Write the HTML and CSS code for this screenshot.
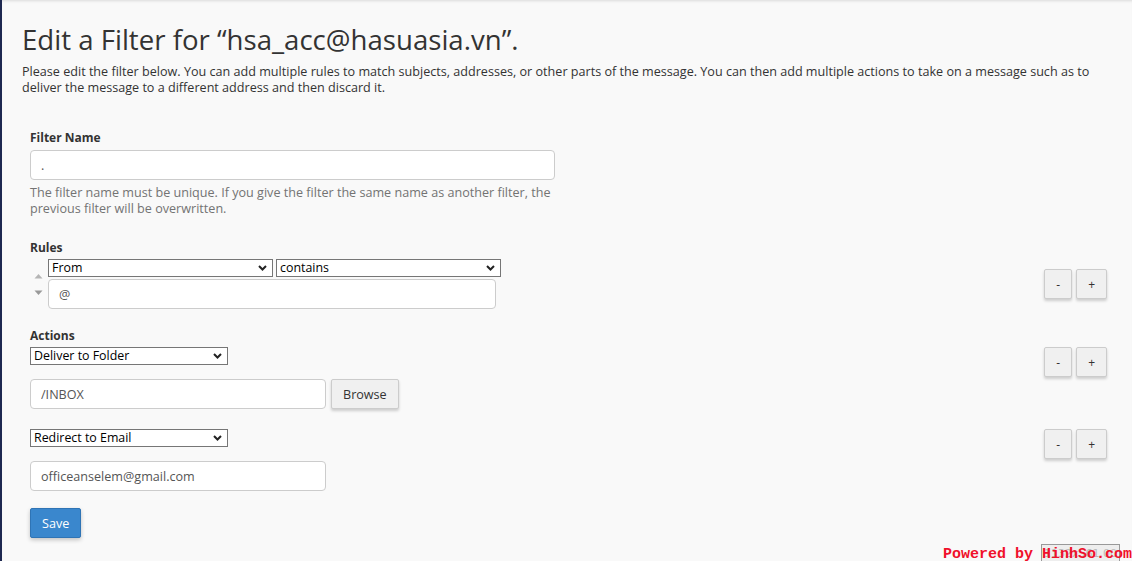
FILE: index.html
```html
<!DOCTYPE html>
<html lang="en">
<head>
    <meta charset="UTF-8">
    <meta name="viewport" content="width=device-width, initial-scale=1.0">
    <title>Edit a Filter</title>
    <link rel="stylesheet" href="styles.css">
</head>
<body>
    <div class="page">
        <h1 class="page-title">Edit a Filter for “hsa_acc@hasuasia.vn”.</h1>
        <p class="intro">Please edit the filter below. You can add multiple rules to match subjects, addresses, or other parts of the message. You can then add multiple actions to take on a message such as to deliver the message to a different address and then discard it.</p>

        <form class="filter-form">
            <div class="form-group name-group">
                <label class="field-label" for="filterName">Filter Name</label>
                <input type="text" class="text-input name-input" id="filterName" value=".">
                <p class="help-text">The filter name must be unique. If you give the filter the same name as another filter, the previous filter will be overwritten.</p>
            </div>

            <div class="form-group rules-group">
                <label class="field-label">Rules</label>
                <div class="rule-row">
                    <div class="rule-order">
                        <svg class="arrow-up" width="9" height="8" viewBox="0 0 9 8"><polygon points="0.5,6.5 4.5,2 8.5,6.5" /></svg>
                        <svg class="arrow-down" width="9" height="8" viewBox="0 0 9 8"><polygon points="0.5,1.5 4.5,6 8.5,1.5" /></svg>
                    </div>
                    <div class="rule-fields">
                        <div class="rule-selects">
                            <select class="plain-select part-select">
                                <option>From</option>
                                <option>Subject</option>
                                <option>To</option>
                            </select>
                            <select class="plain-select match-select">
                                <option>contains</option>
                                <option>equals</option>
                                <option>begins with</option>
                            </select>
                        </div>
                        <input type="text" class="text-input rule-input" value="@">
                    </div>
                    <div class="row-buttons">
                        <button type="button" class="small-btn">-</button>
                        <button type="button" class="small-btn">+</button>
                    </div>
                </div>
            </div>

            <div class="form-group actions-group">
                <label class="field-label">Actions</label>
                <div class="action-row">
                    <div class="action-fields">
                        <select class="plain-select action-select">
                            <option>Deliver to Folder</option>
                            <option>Redirect to Email</option>
                            <option>Discard Message</option>
                        </select>
                        <div class="action-value">
                            <input type="text" class="text-input action-input" value="/INBOX">
                            <button type="button" class="browse-btn">Browse</button>
                        </div>
                    </div>
                    <div class="row-buttons">
                        <button type="button" class="small-btn">-</button>
                        <button type="button" class="small-btn">+</button>
                    </div>
                </div>
                <div class="action-row second-action">
                    <div class="action-fields">
                        <select class="plain-select action-select">
                            <option>Redirect to Email</option>
                            <option>Deliver to Folder</option>
                            <option>Discard Message</option>
                        </select>
                        <div class="action-value">
                            <input type="text" class="text-input action-input" value="officeanselem@gmail.com">
                        </div>
                    </div>
                    <div class="row-buttons">
                        <button type="button" class="small-btn">-</button>
                        <button type="button" class="small-btn">+</button>
                    </div>
                </div>
            </div>

            <button type="submit" class="save-btn">Save</button>
        </form>
    </div>

    <div class="credit">
        <span class="credit-box">1132x561.00</span>
        <span class="credit-text">Powered by HinhSo.com</span>
    </div>
</body>
</html>
```

FILE: styles.css
```css
html, body {
    margin: 0;
    padding: 0;
}

body {
    position: relative;
    background-color: #f9f9f9;
    font-family: "Open Sans", "Liberation Sans", sans-serif;
    font-size: 12.6px;
    line-height: 16px;
    color: #333;
    overflow: hidden;
}

.page {
    box-sizing: border-box;
    min-height: 561px;
    border-left: 2px solid #1e2850;
    padding: 24px 25px 0 20px;
    box-shadow: inset 0 3px 3px -2px rgba(0, 0, 0, 0.12);
}

.page-title {
    margin: 0;
    font-size: 27.6px;
    line-height: 30px;
    font-weight: 400;
    color: #333;
}

.intro {
    margin: 10px 0 0;
}

.filter-form {
    padding-left: 8px;
}

.form-group {
    margin: 0;
}

.name-group {
    margin-top: 34px;
}

.rules-group {
    margin-top: 23px;
}

.actions-group {
    margin-top: 19px;
}

.field-label {
    display: block;
    font-size: 12px;
    font-weight: 700;
    color: #333;
}

.text-input {
    box-sizing: border-box;
    display: block;
    height: 30px;
    padding: 0 10px;
    border: 1px solid #ccc;
    border-radius: 4px;
    background-color: #fff;
    font-family: "Open Sans", "Liberation Sans", sans-serif;
    font-size: 12.6px;
    color: #555;
}

.name-input {
    width: 525px;
    margin-top: 4px;
}

.help-text {
    margin: 5px 0 0;
    width: 545px;
    color: #737373;
}

.plain-select {
    box-sizing: border-box;
    display: block;
    height: 18px;
    margin: 0;
    padding: 0 18px 0 3px;
    border: 1px solid #767676;
    border-radius: 0;
    background: #fff url("data:image/svg+xml,%3Csvg xmlns='http://www.w3.org/2000/svg' width='9' height='6' viewBox='0 0 9 6'%3E%3Cpolyline points='1,1 4.5,4.5 8,1' fill='none' stroke='%23222' stroke-width='2'/%3E%3C/svg%3E") no-repeat right 5px center;
    -webkit-appearance: none;
    appearance: none;
    font-family: "Open Sans", "Liberation Sans", sans-serif;
    font-size: 12.4px;
    line-height: 16px;
    color: #000;
}

/* rules */
.rule-row {
    display: flex;
    align-items: center;
    margin-top: 3px;
}

.rule-order {
    width: 16px;
    margin-right: 2px;
    display: flex;
    flex-direction: column;
    align-items: center;
    gap: 9px;
}

.rule-order svg {
    display: block;
}

.arrow-up polygon {
    fill: #b5b5b5;
}

.arrow-down polygon {
    fill: #999;
}

.rule-selects {
    display: flex;
    gap: 3px;
}

.part-select {
    width: 225px;
}

.match-select {
    width: 225px;
}

.rule-input {
    width: 448px;
    margin-top: 2px;
}

.row-buttons {
    display: flex;
    gap: 4px;
    margin-left: auto;
}

.small-btn {
    box-sizing: border-box;
    height: 30px;
    padding: 0 11px;
    border: 1px solid #ccc;
    border-radius: 2px;
    background-color: #f0f0f0;
    box-shadow: 0 2px 3px rgba(0, 0, 0, 0.18);
    font-family: "Open Sans", "Liberation Sans", sans-serif;
    font-size: 12px;
    color: #333;
    cursor: pointer;
}

/* actions */
.action-row {
    display: flex;
    align-items: flex-start;
    margin-top: 3px;
}

.second-action {
    margin-top: 20px;
}

.action-select {
    width: 198px;
}

.action-value {
    display: flex;
    align-items: center;
    gap: 5px;
    margin-top: 14px;
}

.action-input {
    width: 296px;
}

.browse-btn {
    box-sizing: border-box;
    height: 30px;
    padding: 0 11px;
    border: 1px solid #ccc;
    border-radius: 2px;
    background-color: #f0f0f0;
    box-shadow: 0 2px 3px rgba(0, 0, 0, 0.18);
    font-family: "Open Sans", "Liberation Sans", sans-serif;
    font-size: 12.6px;
    color: #333;
    cursor: pointer;
}

.save-btn {
    box-sizing: border-box;
    display: block;
    height: 30px;
    margin-top: 17px;
    padding: 0 11px;
    border: 1px solid #2f74b5;
    border-radius: 2px;
    background-color: #3a87cd;
    box-shadow: 0 2px 4px rgba(0, 0, 0, 0.22);
    font-family: "Open Sans", "Liberation Sans", sans-serif;
    font-size: 12.6px;
    color: #fff;
    cursor: pointer;
}

/* footer credit, sits over the page corner */
.credit {
    position: absolute;
    right: 0;
    top: 544px;
    width: 192px;
    height: 17px;
}

.credit-box {
    position: absolute;
    left: 101px;
    top: 0;
    width: 77px;
    height: 18px;
    border: 1px solid #999;
    background-color: #eee;
    font-family: "DejaVu Sans", sans-serif;
    font-size: 11px;
    line-height: 18px;
    color: #bbb;
    text-align: center;
}

.credit-text {
    position: absolute;
    right: 0;
    top: 3px;
    font-family: "Liberation Mono", monospace;
    font-size: 15px;
    line-height: 16px;
    font-weight: 700;
    color: #f0102a;
    white-space: nowrap;
}
```
